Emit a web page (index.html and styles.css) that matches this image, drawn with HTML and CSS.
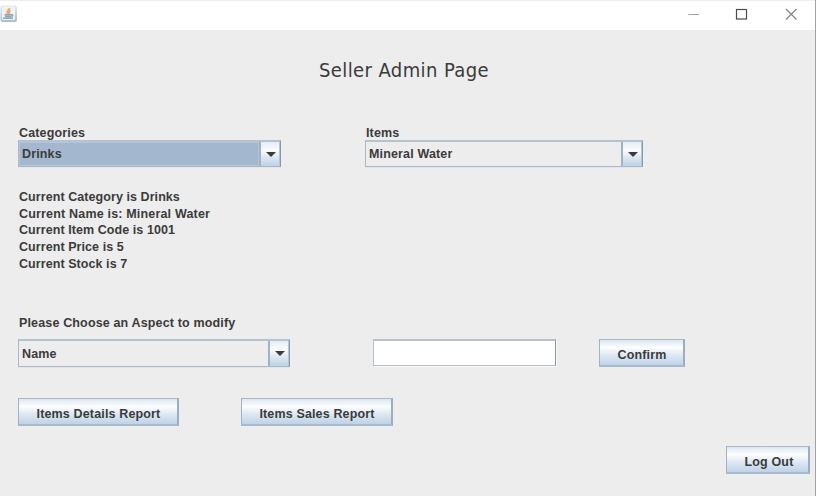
FILE: index.html
```html
<!DOCTYPE html>
<html lang="en">
<head>
<meta charset="utf-8">
<title>Seller Admin Page</title>
<link rel="stylesheet" href="styles.css">
</head>
<body>
<div class="window">
  <header class="titlebar">
    <svg class="app-icon" width="18" height="18" viewBox="0 0 18 18">
      <defs><linearGradient id="tile" x1="0" y1="0" x2="0" y2="1"><stop offset="0" stop-color="#e3eaee"/><stop offset="1" stop-color="#a4bdcc"/></linearGradient></defs>
      <rect x=".5" y=".5" width="16.5" height="16.5" rx="2" fill="url(#tile)"/>
      <rect x="2" y="1.5" width="13" height="13.5" rx="1" fill="#f1f3f4"/>
      <path d="M9.300 3C10 5 6.500 6 7.300 8L8.700 9.500M10.500 5.500C8.500 6.500 9 7.500 9.300 8.800" fill="none" stroke="#eda66b" stroke-width="1.900"/>
      <path d="M4.500 9.700H11.500M5 11.600H11M3 13.300H13M11.500 9.700Q14 9.800 11.500 11.800" fill="none" stroke="#8ba6b8" stroke-width="1.500"/>
    </svg>
    <div class="controls">
      <svg width="124" height="30" viewBox="0 0 124 30" fill="none">
        <path d="M2.500 14.500H13" stroke="#a5a5a5"/>
        <rect x="50.500" y="9.500" width="10" height="9.500" stroke="#4c4c4c" stroke-width="1.200"/>
        <path d="M100 9L110.500 19.500M110.500 9L100 19.500" stroke="#858585" stroke-width="1.200"/>
      </svg>
    </div>
  </header>
  <main>
    <h1>Seller Admin Page</h1>
    <section class="selectors">
      <div class="field categories">
        <div class="label">Categories</div>
        <div class="combo selected"><span class="value">Drinks</span><span class="arrow"></span></div>
      </div>
      <div class="field items">
        <div class="label">Items</div>
        <div class="combo"><span class="value">Mineral Water</span><span class="arrow"></span></div>
      </div>
    </section>
    <section class="details">
      <div>Current Category is Drinks</div>
      <div class="name">Current Name is: Mineral Water</div>
      <div>Current Item Code is 1001</div>
      <div>Current Price is 5</div>
      <div>Current Stock is 7</div>
    </section>
    <div class="prompt">Please Choose an Aspect to modify</div>
    <section class="modify">
      <div class="combo aspect"><span class="value">Name</span><span class="arrow"></span></div>
      <input class="entry" type="text" aria-label="New value">
      <button class="confirm">Confirm</button>
    </section>
    <section class="reports">
      <button class="report-details">Items Details Report</button>
      <button class="report-sales">Items Sales Report</button>
    </section>
    <footer><button class="logout">Log Out</button></footer>
  </main>
</div>
</body>
</html>
```
FILE: styles.css
```css
* { box-sizing: border-box; }
body {
  margin: 0;
  width: 816px;
  height: 496px;
  overflow: hidden;
  background: #ededed;
  color: #3b3b3b;
  font: bold 12.5px/17px "Liberation Sans", Arial, sans-serif;
  letter-spacing: .15px;
}
.window { height: 496px; border-right: 1px solid #a2a2a2; }
.titlebar {
  display: flex;
  justify-content: space-between;
  height: 30px;
  background: #fff;
  border-top: 1px solid #ededed;
}
.app-icon { display: block; margin-top: 4px; }
.controls { width: 129px; height: 29px; margin-top: -1px; }
.controls svg { display: block; }
main { padding-left: 18px; }
h1 {
  margin: 0;
  padding: 27px 0 0 301px;
  height: 95px;
  font: 20px/26px "DejaVu Sans Condensed", "DejaVu Sans", sans-serif;
  letter-spacing: .4px;
}
.selectors { display: flex; gap: 84px; height: 64px; }
.label { height: 15px; line-height: 17px; padding-left: 1px; }
.categories { width: 263px; }
.items { width: 278px; }
.combo {
  display: flex;
  height: 27px;
  border: 1px solid #a9b9c8;
  border-top: 2px solid #b3c3d0;
  border-right-color: #8299ae;
  box-shadow: 0 1px #e2e5e9;
}
.value { flex: 1; padding-left: 3px; line-height: 25px; }
.selected .value { background: #a3b8ce; border: 1px solid #b3c6d7; padding-left: 2px; line-height: 23px; }
.arrow {
  display: flex;
  align-items: center;
  justify-content: center;
  width: 21px;
  border-left: 2px solid #9fb3c6;
  border-right: 1px solid #b4c6d8;
  background: linear-gradient(#e5edf5, #fafcfe 35%, #dce7f2 65%, #bfd2e6);
}
.arrow::before {
  content: "";
  margin-left: 1px;
  border: 5px solid transparent;
  border-top: 5px solid #3b3b3b;
  border-bottom: 0;
}
.details { height: 119px; padding: 0 1px; line-height: 16.7px; letter-spacing: .07px; }
.details .name { letter-spacing: .18px; }
.prompt { height: 31px; line-height: 30px; padding-left: 1px; }
.modify { display: flex; height: 59px; }
.aspect { width: 272px; height: 28px; }
.aspect .value { line-height: 27px; }
.entry {
  width: 183px;
  height: 27px;
  margin: 0 43px 0 83px;
  padding: 2px 4px;
  border: 1px solid #b5bec7;
  border-top: 2px solid #b9c0c8;
  border-right-color: #8797a6;
  background: #fff;
  box-shadow: 1px 1px #fafafa;
}
button {
  height: 28px;
  padding: 5px 0 0 1px;
  border: 1px solid #a1b2c3;
  border-top-color: #acb7c4;
  border-right: 2px solid #9aadc1;
  border-bottom: 2px solid #a7bbcf;
  border-radius: 0;
  background: linear-gradient(#dce7f1, #fcfdfe 30%, #dce7f2 62%, #bfd2e6);
  color: inherit;
  font: inherit;
  letter-spacing: inherit;
}
.confirm { width: 86px; }
.reports { display: flex; gap: 62px; height: 48px; }
.report-details { width: 161px; }
.report-sales { width: 152px; }
footer { display: flex; justify-content: flex-end; padding-right: 5px; }
.logout { width: 84px; padding-left: 3px; }
```
